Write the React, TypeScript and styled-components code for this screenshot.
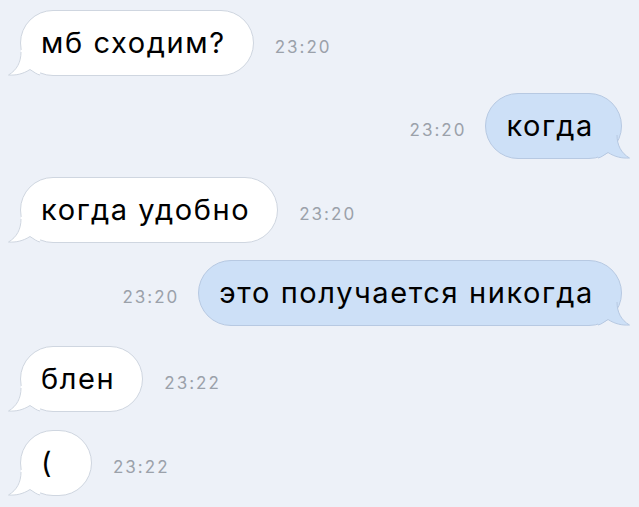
import styled, { createGlobalStyle } from "styled-components";

const GlobalStyle = createGlobalStyle`
  html, body {
    margin: 0;
    padding: 0;
    background: #edf1f8;
  }
  body {
    font-family: Inter, "Liberation Sans", Arial, sans-serif;
    -webkit-font-smoothing: antialiased;
  }
`;

const Chat = styled.div`
  width: 639px;
  height: 507px;
  overflow: hidden;
  background: #edf1f8;
  display: flex;
  flex-direction: column;
  padding-top: 10px;
  box-sizing: border-box;
`;

const Row = styled.div<{ $out?: boolean; $space: number }>`
  display: flex;
  align-items: center;
  justify-content: ${(p) => (p.$out ? "flex-end" : "flex-start")};
  gap: ${(p) => (p.$out ? 19 : 21)}px;
  margin-top: ${(p) => p.$space}px;
  padding: ${(p) => (p.$out ? "0 17px 0 0" : "0 0 0 20px")};
`;

const Bubble = styled.div<{ $out?: boolean }>`
  position: relative;
  height: 66px;
  min-width: 72px;
  box-sizing: border-box;
  display: flex;
  align-items: center;
  padding: 0 27px 2px 20px;
  border-radius: 33px;
  font-size: 29px;
  letter-spacing: 1.6px;
  color: #000;
  white-space: nowrap;
  background: ${(p) => (p.$out ? "#cde0f7" : "#ffffff")};
  border: 1px solid ${(p) => (p.$out ? "#b7c9e2" : "#cfd6e0")};
`;

const Tail = styled.svg<{ $out?: boolean }>`
  position: absolute;
  bottom: -1px;
  width: 32px;
  height: 26px;
  ${(p) => (p.$out ? "right: -9px; transform: scaleX(-1);" : "left: -13px;")}
`;

const Label = styled.span`
  position: relative;
`;

const Time = styled.span`
  font-size: 17px;
  letter-spacing: 2px;
  color: #9ba1aa;
  padding-top: 8px;
`;

type Msg = { text: string; time: string; out?: boolean; space: number };

const messages: Msg[] = [
  { text: "мб сходим?", time: "23:20", space: 0 },
  { text: "когда", time: "23:20", out: true, space: 17 },
  { text: "когда удобно", time: "23:20", space: 18 },
  { text: "это получается никогда", time: "23:20", out: true, space: 17 },
  { text: "блен", time: "23:22", space: 20 },
  { text: "(", time: "23:22", space: 18 },
];

function BubbleTail({ out }: { out?: boolean }) {
  const fill = out ? "#cde0f7" : "#ffffff";
  const stroke = out ? "#b7c9e2" : "#cfd6e0";
  return (
    <Tail $out={out} viewBox="0 0 32 26">
      <path
        d="M13 0 C13 12 9 20 0.5 25 C8 25.5 15 24 22 19.5 C26 22 29 24.5 32 25 L32 0 Z"
        fill={fill}
      />
      <path
        d="M13 2 C13 12 9 20 0.5 25 C8 25.5 15 24 22 19.5 C26 22 29 24.5 32 25"
        fill="none"
        stroke={stroke}
        strokeWidth="1"
      />
    </Tail>
  );
}

export default function App() {
  return (
    <>
      <GlobalStyle />
      <Chat>
        {messages.map((m, i) => {
          const bubble = (
            <Bubble key="b" $out={m.out}>
              <BubbleTail out={m.out} />
              <Label>{m.text}</Label>
            </Bubble>
          );
          const time = <Time key="t">{m.time}</Time>;
          return (
            <Row key={i} $out={m.out} $space={m.space}>
              {m.out ? [time, bubble] : [bubble, time]}
            </Row>
          );
        })}
      </Chat>
    </>
  );
}
